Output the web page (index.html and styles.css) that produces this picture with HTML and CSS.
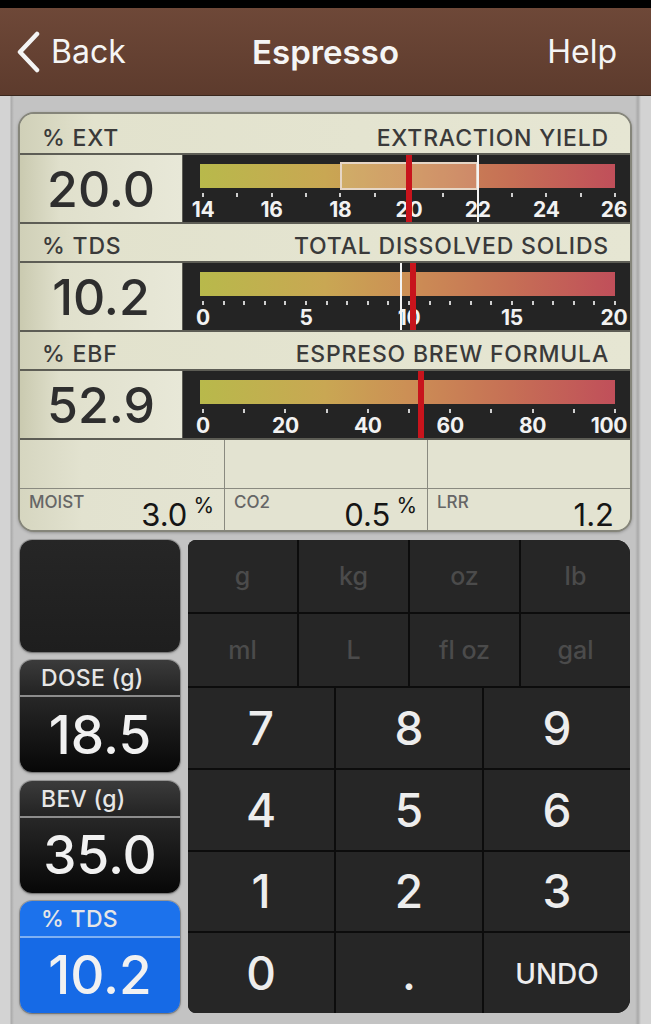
FILE: index.html
```html
<!DOCTYPE html>
<html lang="en">
<head>
  <meta charset="utf-8">
  <title>Espresso</title>
  <meta name="viewport" content="width=device-width, initial-scale=1">
  <link rel="stylesheet" href="styles.css">
</head>
<body>
  <div class="statusbar"></div>
  <header class="navbar">
    <div class="nav-back">
      <svg width="26" height="42" viewBox="0 0 26 42"><path d="M22 3 L5 21 L22 39" fill="none" stroke="#f4f4f4" stroke-width="4.5" stroke-linecap="round" stroke-linejoin="round"/></svg>
      <span>Back</span>
    </div>
    <div class="nav-title">Espresso</div>
    <div class="nav-help">Help</div>
  </header>

  <main class="screen">
    <section class="panel">
      <div class="meter first">
        <div class="meter-head"><span>% EXT</span><span>EXTRACTION YIELD</span></div>
        <div class="meter-body">
          <div class="meter-value">20.0</div>
          <div class="gauge">
            <div class="bar"></div>
            <div class="ticks"><i></i><i></i><i></i><i></i><i></i><i></i><i></i><i></i><i></i><i></i><i></i><i></i><i></i></div>
            <div class="nums"><span>14</span><span>16</span><span>18</span><span>20</span><span>22</span><span>24</span><span class="end">26</span></div>
            <div class="marks">
              <div class="range" style="left:33.33%;width:33.33%"></div>
              <div class="target" style="left:66.67%"></div>
              <div class="needle" style="left:50%"></div>
            </div>
          </div>
        </div>
      </div>

      <div class="meter">
        <div class="meter-head"><span>% TDS</span><span>TOTAL DISSOLVED SOLIDS</span></div>
        <div class="meter-body">
          <div class="meter-value">10.2</div>
          <div class="gauge">
            <div class="bar"></div>
            <div class="ticks"><i></i><i></i><i></i><i></i><i></i><i></i><i></i><i></i><i></i><i></i><i></i><i></i><i></i><i></i><i></i><i></i><i></i><i></i><i></i><i></i><i></i></div>
            <div class="nums"><span>0</span><span>5</span><span>10</span><span>15</span><span class="end">20</span></div>
            <div class="marks">
              <div class="target" style="left:48.1%"></div>
              <div class="needle" style="left:51%"></div>
            </div>
          </div>
        </div>
      </div>

      <div class="meter">
        <div class="meter-head"><span>% EBF</span><span>ESPRESO BREW FORMULA</span></div>
        <div class="meter-body">
          <div class="meter-value">52.9</div>
          <div class="gauge">
            <div class="bar"></div>
            <div class="ticks"><i></i><i></i><i></i><i></i><i></i><i></i><i></i><i></i><i></i><i></i><i></i></div>
            <div class="nums"><span>0</span><span>20</span><span>40</span><span>60</span><span>80</span><span class="end wide">100</span></div>
            <div class="marks">
              <div class="needle" style="left:52.9%"></div>
            </div>
          </div>
        </div>
      </div>

      <div class="extras">
        <div class="extra">
          <div class="extra-top"></div>
          <div class="extra-bottom">
            <span class="extra-label">MOIST</span>
            <span class="extra-value">3.0<sup>%</sup></span>
          </div>
        </div>
        <div class="extra">
          <div class="extra-top"></div>
          <div class="extra-bottom">
            <span class="extra-label">CO2</span>
            <span class="extra-value">0.5<sup>%</sup></span>
          </div>
        </div>
        <div class="extra">
          <div class="extra-top"></div>
          <div class="extra-bottom">
            <span class="extra-label">LRR</span>
            <span class="extra-value plain">1.2</span>
          </div>
        </div>
      </div>
    </section>

    <section class="entry">
      <div class="fields">
        <div class="field blank"></div>
        <div class="field">
          <div class="field-label">DOSE (g)</div>
          <div class="field-value">18.5</div>
        </div>
        <div class="field">
          <div class="field-label">BEV (g)</div>
          <div class="field-value">35.0</div>
        </div>
        <div class="field active">
          <div class="field-label">% TDS</div>
          <div class="field-value">10.2</div>
        </div>
      </div>

      <div class="keypad">
        <div class="units">
          <div class="key">g</div><div class="key">kg</div><div class="key">oz</div><div class="key">lb</div>
          <div class="key">ml</div><div class="key">L</div><div class="key">fl oz</div><div class="key">gal</div>
        </div>
        <div class="digits">
          <div class="key">7</div><div class="key">8</div><div class="key">9</div>
          <div class="key">4</div><div class="key">5</div><div class="key">6</div>
          <div class="key">1</div><div class="key">2</div><div class="key">3</div>
          <div class="key">0</div><div class="key">.</div><div class="key undo">UNDO</div>
        </div>
      </div>
    </section>
  </main>
</body>
</html>
```

FILE: styles.css
```css
* { margin: 0; padding: 0; box-sizing: border-box; }
body {
  width: 651px; height: 1024px; overflow: hidden;
  font-family: Inter, "Liberation Sans", sans-serif;
  background: #c3c3c3;
}

.statusbar { height: 8px; background: #000; }
.navbar {
  height: 88px; display: grid; grid-template-columns: 1fr auto 1fr; align-items: center;
  padding: 0 15px; color: #f5f5f5;
  background: linear-gradient(#6e4838, #5d3b2d);
  border-bottom: 1px solid #3a271d;
}
.nav-back { display: flex; align-items: center; gap: 10px; font-size: 32px; }
.nav-title { font-size: 33px; font-weight: 600; }
.nav-help { font-size: 32px; text-align: right; padding-right: 19px; }

.screen {
  height: 928px; padding: 16px 0 0 18px;
  background: linear-gradient(90deg, #d3d3d3 0, #d3d3d3 10px, #a9a9a9 11px, #c3c3c3 14px, #c3c3c3 635px, #a9a9a9 638px, #d3d3d3 641px);
}

/* gauges panel */
.panel {
  width: 614px; border: 2px solid #85857a; border-radius: 16px; overflow: hidden;
  box-shadow: 0 1px 3px rgba(0,0,0,0.25);
  background: #e4e4d0;
}
.meter-head {
  height: 39px; display: flex; justify-content: space-between; align-items: center;
  padding: 6px 21px 0 22px; font-size: 23px; font-weight: 500; color: #3a3a3a; letter-spacing: 0.8px;
  background: linear-gradient(90deg, #d0d0b8, #e2e2cd 12%, #e6e6d3);
  border-bottom: 2px solid #5d5d55;
}
.meter.first .meter-head { height: 41px; padding-top: 8px; }
.meter-body { height: 69px; display: flex; border-bottom: 2px solid #5d5d55; }
.meter-value {
  width: 163px; display: flex; align-items: center; justify-content: center;
  font-size: 50px; font-weight: 500; color: #2e2e2e;
  background: linear-gradient(90deg, #cacab0, #e0e0cc 25%, #e8e8d8);
  border-right: 1px solid #5d5d55;
}
.gauge { flex: 1; position: relative; background: #242424; padding: 9px 15px 0 20px; }
.bar {
  height: 24px; margin-left: -3px;
  background: linear-gradient(90deg, #b8b94b 0%, #c9a753 30%, #cc8f55 50%, #c66f55 75%, #c04f5a 100%);
}
.ticks { display: flex; justify-content: space-between; margin: 5px -1px 0; height: 4px; }
.ticks i { width: 2px; height: 4px; background: #cfcfcf; }
.nums { display: flex; justify-content: space-between; margin-top: 3px; line-height: 20px; }
.nums span {
  width: 0; display: flex; justify-content: center; white-space: nowrap;
  color: #f2f2f2; font-size: 21px; font-weight: 700; letter-spacing: -0.3px;
}
.nums span.end { transform: translateX(-1px); }
.nums span.wide { transform: translateX(-6px); }
.marks { position: absolute; top: 0; bottom: 0; left: 20px; right: 15px; }
.needle { position: absolute; top: 0; bottom: 0; width: 6px; margin-left: -3px; background: #c8141c; }
.target { position: absolute; top: 0; bottom: 0; width: 2px; margin-left: -1px; background: #f4f4f4; }
.range {
  position: absolute; top: 7px; height: 28px;
  border: 2px solid #e6d6c6; background: rgba(255,255,255,0.12);
}

.extras { display: grid; grid-template-columns: 204px 203px 203px; height: 90px; }
.extra {
  display: flex; flex-direction: column;
  background: linear-gradient(90deg, #d6d6c0, #e2e2cf 30%, #e4e4d2);
}
.extra + .extra { border-left: 1px solid #8a8a80; background: #e3e3d1; }
.extra-top { height: 49px; border-bottom: 1px solid #8a8a80; }
.extra-bottom { flex: 1; display: flex; justify-content: space-between; padding: 5px 10px 0 9px; }
.extra-label { font-size: 17px; font-weight: 500; color: #666; line-height: 17px; }
.extra-value {
  align-self: flex-end; display: flex; align-items: flex-start;
  font-size: 31px; line-height: 31px; color: #151515;
}
.extra-value sup { font-size: 21px; line-height: 21px; margin: -4px 0 0 6px; }
.extra-value.plain { margin-right: 6px; }

/* inputs */
.entry { display: flex; gap: 8px; margin-top: 8px; padding-left: 2px; }
.fields { width: 160px; display: flex; flex-direction: column; gap: 8.3px; }
.field {
  height: 112px; border-radius: 12px; overflow: hidden; display: flex; flex-direction: column;
  box-shadow: 0 0 0 1px rgba(0,0,0,0.2), 0 1px 3px rgba(0,0,0,0.35);
}
.field.blank { background: linear-gradient(#262626, #1e1e1e); }
.field-label {
  height: 37px; padding-left: 21px; line-height: 37px;
  font-size: 23px; font-weight: 500; color: #e6e6e6; letter-spacing: 0.3px;
  background: linear-gradient(#3b3b3b, #232323);
  border-bottom: 2px solid #8c8c8c;
}
.field-value {
  flex: 1; display: flex; align-items: center; justify-content: center;
  font-size: 53px; font-weight: 500; color: #f1f1f1;
  background: linear-gradient(#272727, #070707);
}
.field.active .field-label { background: #1c72ec; border-color: #7fb0f2; }
.field.active .field-value { background: #166ae6; }

.keypad {
  width: 442px; height: 473px; display: flex; flex-direction: column; gap: 2px;
  background: #0c0c0c; border-radius: 8px 14px 14px 8px; overflow: hidden;
}
.key {
  display: flex; align-items: center; justify-content: center;
  background: #262626; color: #ededed; font-weight: 500;
}
.units { display: grid; grid-template-columns: repeat(4, 1fr); grid-template-rows: 72px 72px; gap: 2px; }
.units .key { font-size: 25px; color: #4b4b4b; }
.digits { flex: 1; display: grid; grid-template-columns: repeat(3, 1fr); grid-template-rows: repeat(4, 1fr); gap: 2px; }
.digits .key { font-size: 46px; }
.digits .key.undo { font-size: 28px; padding-top: 2px; }
```
